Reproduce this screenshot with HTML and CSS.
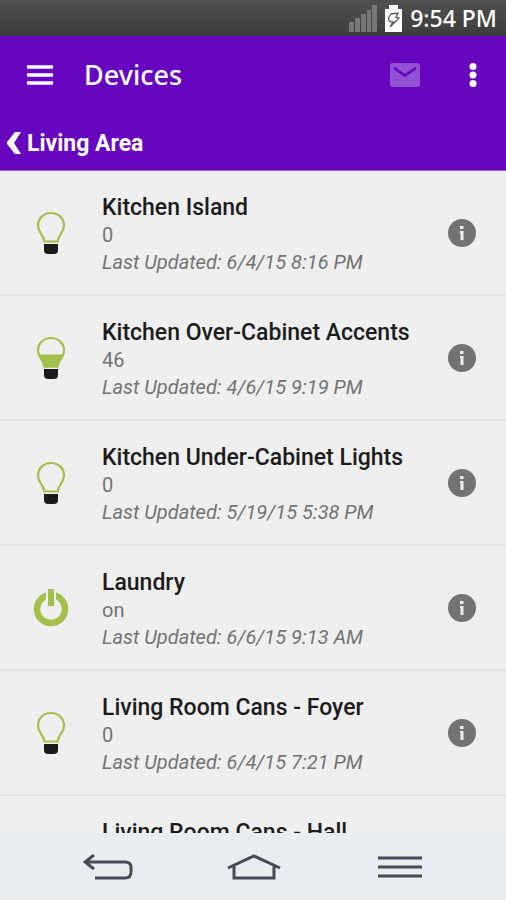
FILE: index.html
```
<!DOCTYPE html>
<html lang="en">
<head>
  <meta charset="UTF-8" />
  <meta name="viewport" content="width=device-width, initial-scale=1.0" />
  <title>Devices</title>
  <link rel="stylesheet" href="styles.css">
</head>
<body>
  <svg class="sprite" aria-hidden="true">
    <symbol id="bulb" viewBox="0 0 30 44">
      <path d="M15 2C7.500 2 2 7.500 2 14.500C2 22 7.500 23.500 8.500 30.500H21.500C22.500 23.500 28 22 28 14.500C28 7.500 22.500 2 15 2Z" fill="none" stroke="#a2c04a" stroke-width="2.200"/>
      <path d="M8 33H22V39Q22 43 18 43H12Q8 43 8 39Z" fill="#1b1b1b"/>
    </symbol>
    <symbol id="bulb-dim" viewBox="0 0 30 44">
      <path d="M15 2C7.500 2 2 7.500 2 14.500C2 22 7.500 23.500 8.500 30.500H21.500C22.500 23.500 28 22 28 14.500C28 7.500 22.500 2 15 2Z" fill="none" stroke="#a2c04a" stroke-width="2.200"/>
      <path d="M2.500 18.500H27.500C26 22 23.500 24 22.500 31.500H7.500C6.500 24 4 22 2.500 18.500Z" fill="#a2c04a"/>
      <path d="M8 33H22V39Q22 43 18 43H12Q8 43 8 39Z" fill="#1b1b1b"/>
    </symbol>
    <symbol id="power" viewBox="0 0 36 38">
      <circle cx="18" cy="20" r="14" fill="none" stroke="#a2c04a" stroke-width="6.500"/>
      <path d="M18 0V18" stroke="#efefef" stroke-width="10"/>
      <path d="M18 0V17" stroke="#a2c04a" stroke-width="6"/>
    </symbol>
    <symbol id="info" viewBox="0 0 28 28">
      <circle cx="14" cy="14" r="14" fill="#737373"/>
      <path d="M12 7H15.500V10H12ZM12 12H15.500V21H12.500V14H12Z" fill="#efefef"/>
    </symbol>
  </svg>

  <div class="status">
    <svg width="28" height="27" viewBox="0 0 28 27" fill="#777">
      <path d="M0 17h5v10H0zM6 13h5v14H6zM12 9h5v18h-5zM18 5h4v22h-4zM23 0h5v27h-5z"/>
    </svg>
    <svg width="17" height="27" viewBox="0 0 17 27">
      <path d="M4 0H13V4H17V27H0V4H4Z" fill="#fff"/>
      <path d="M6 9L13 8L11 12L14 13L5 22L8 17Q2 17 4 12Z" fill="none" stroke="#555" stroke-width="1.300"/>
    </svg>
    <span class="clock">9:54 PM</span>
  </div>

  <header>
    <div class="toolbar">
      <button class="icon-button" aria-label="Menu">
        <svg width="26" height="20" viewBox="0 0 26 20"><path d="M0 2H26M0 10H26M0 18H26" stroke="#fff" stroke-width="3.500"/></svg>
      </button>
      <h1>Devices</h1>
      <button class="icon-button mail" aria-label="Messages">
        <svg width="30" height="24" viewBox="0 0 30 24">
          <rect width="30" height="24" rx="3" fill="#9250d4"/>
          <path d="M4 5L15 12.500L26 5" fill="none" stroke="#6706bf" stroke-width="2.500"/>
        </svg>
      </button>
      <button class="icon-button" aria-label="More options">
        <svg width="8" height="24" viewBox="0 0 8 24" fill="#fff"><circle cx="4" cy="3.500" r="3.500"/><circle cx="4" cy="12" r="3.500"/><circle cx="4" cy="20.500" r="3.500"/></svg>
      </button>
    </div>
    <a class="back" href="#">
      <svg width="14" height="22" viewBox="0 0 14 22"><path d="M8 0H14L7 11L14 22H8L0 12V10Z" fill="#fff"/></svg>
      Living Area
    </a>
  </header>

  <main>
    <ul class="devices">
      <li>
        <svg class="bulb"><use href="#bulb"/></svg>
        <div class="text">
          <h2>Kitchen Island</h2>
          <p>0</p>
          <p class="updated">Last Updated: 6/4/15 8:16 PM</p>
        </div>
        <button class="info" aria-label="Info"><svg><use href="#info"/></svg></button>
      </li>
      <li>
        <svg class="bulb"><use href="#bulb-dim"/></svg>
        <div class="text">
          <h2>Kitchen Over-Cabinet Accents</h2>
          <p>46</p>
          <p class="updated">Last Updated: 4/6/15 9:19 PM</p>
        </div>
        <button class="info" aria-label="Info"><svg><use href="#info"/></svg></button>
      </li>
      <li>
        <svg class="bulb"><use href="#bulb"/></svg>
        <div class="text">
          <h2>Kitchen Under-Cabinet Lights</h2>
          <p>0</p>
          <p class="updated">Last Updated: 5/19/15 5:38 PM</p>
        </div>
        <button class="info" aria-label="Info"><svg><use href="#info"/></svg></button>
      </li>
      <li>
        <svg class="power"><use href="#power"/></svg>
        <div class="text">
          <h2>Laundry</h2>
          <p>on</p>
          <p class="updated">Last Updated: 6/6/15 9:13 AM</p>
        </div>
        <button class="info" aria-label="Info"><svg><use href="#info"/></svg></button>
      </li>
      <li>
        <svg class="bulb"><use href="#bulb"/></svg>
        <div class="text">
          <h2>Living Room Cans - Foyer</h2>
          <p>0</p>
          <p class="updated">Last Updated: 6/4/15 7:21 PM</p>
        </div>
        <button class="info" aria-label="Info"><svg><use href="#info"/></svg></button>
      </li>
      <li>
        <div class="text no-icon">
          <h2>Living Room Cans - Hall</h2>
        </div>
      </li>
    </ul>
  </main>

  <nav>
    <button aria-label="Back">
      <svg width="50" height="26" viewBox="0 0 50 26"><path d="M11 1L2 8L11 15M2 8H42Q48 8 48 13V18Q48 24 42 24H12" /></svg>
    </button>
    <button aria-label="Home">
      <svg width="54" height="26" viewBox="0 0 54 26"><path d="M1 14L27 2L53 14M7 12V24H47V12"/></svg>
    </button>
    <button aria-label="Recent">
      <svg width="44" height="22" viewBox="0 0 44 22"><path d="M0 2H44M0 11H44M0 20H44"/></svg>
    </button>
  </nav>
</body>
</html>
```
FILE: styles.css
```
* {
  box-sizing: border-box;
}
body {
  margin: 0;
  height: 100vh;
  display: flex;
  flex-direction: column;
  font-family: Roboto, sans-serif;
  background: #efefef;
  overflow: hidden;
}
h1, h2, p, ul {
  margin: 0;
  padding: 0;
}
button {
  padding: 0;
  border: none;
  background: none;
}
svg {
  display: block;
}
.sprite {
  position: absolute;
  width: 0;
  height: 0;
}
.status {
  display: flex;
  align-items: center;
  justify-content: flex-end;
  gap: 8px;
  height: 36px;
  padding: 0 9px;
  flex-shrink: 0;
  background: linear-gradient(#505050, #3c3c3c);
}
.clock {
  font: 500 23px/36px "Noto Sans", sans-serif;
  color: #fff;
}
header {
  flex-shrink: 0;
  background: #6706bf;
  color: #fff;
  border-bottom: 1px solid #9c66d0;
}
.toolbar {
  display: flex;
  align-items: center;
  height: 78px;
  padding: 0 29px 0 27px;
}
.toolbar h1 {
  flex: 1;
  margin-left: 31px;
  font: 500 27px/36px "Noto Sans", sans-serif;
}
.mail {
  margin-right: 49px;
}
.back {
  display: flex;
  align-items: center;
  gap: 6px;
  height: 56px;
  padding: 2px 7px 0;
  font-size: 23px;
  font-weight: 700;
  color: #fff;
  text-decoration: none;
}
main {
  flex: 1;
  min-height: 0;
  overflow-y: auto;
  scrollbar-width: none;
}
.devices {
  list-style: none;
}
.devices li {
  display: grid;
  grid-template-columns: 102px 1fr 88px;
  align-items: center;
  justify-items: center;
  height: 125px;
  border-bottom: 2px solid #e4e4e4;
}
.bulb {
  width: 30px;
  height: 44px;
}
.power {
  width: 36px;
  height: 38px;
}
.text {
  justify-self: start;
  align-self: start;
  padding-top: 22px;
  font-size: 20px;
  line-height: 27px;
  color: #747474;
  white-space: nowrap;
}
.no-icon {
  grid-column: 2;
}
.text h2 {
  font-size: 23px;
  line-height: 29px;
  font-weight: 500;
  color: #1c1c1c;
}
.updated {
  font-style: italic;
}
.info svg {
  width: 28px;
  height: 28px;
}
nav {
  display: flex;
  align-items: center;
  flex-shrink: 0;
  height: 67px;
  padding: 0 33px 0 35px;
  background: #e9ecf0;
}
nav button {
  flex: 1;
}
nav svg {
  margin: 0 auto;
}
nav path {
  fill: none;
  stroke: #474b57;
  stroke-width: 3;
}
```
